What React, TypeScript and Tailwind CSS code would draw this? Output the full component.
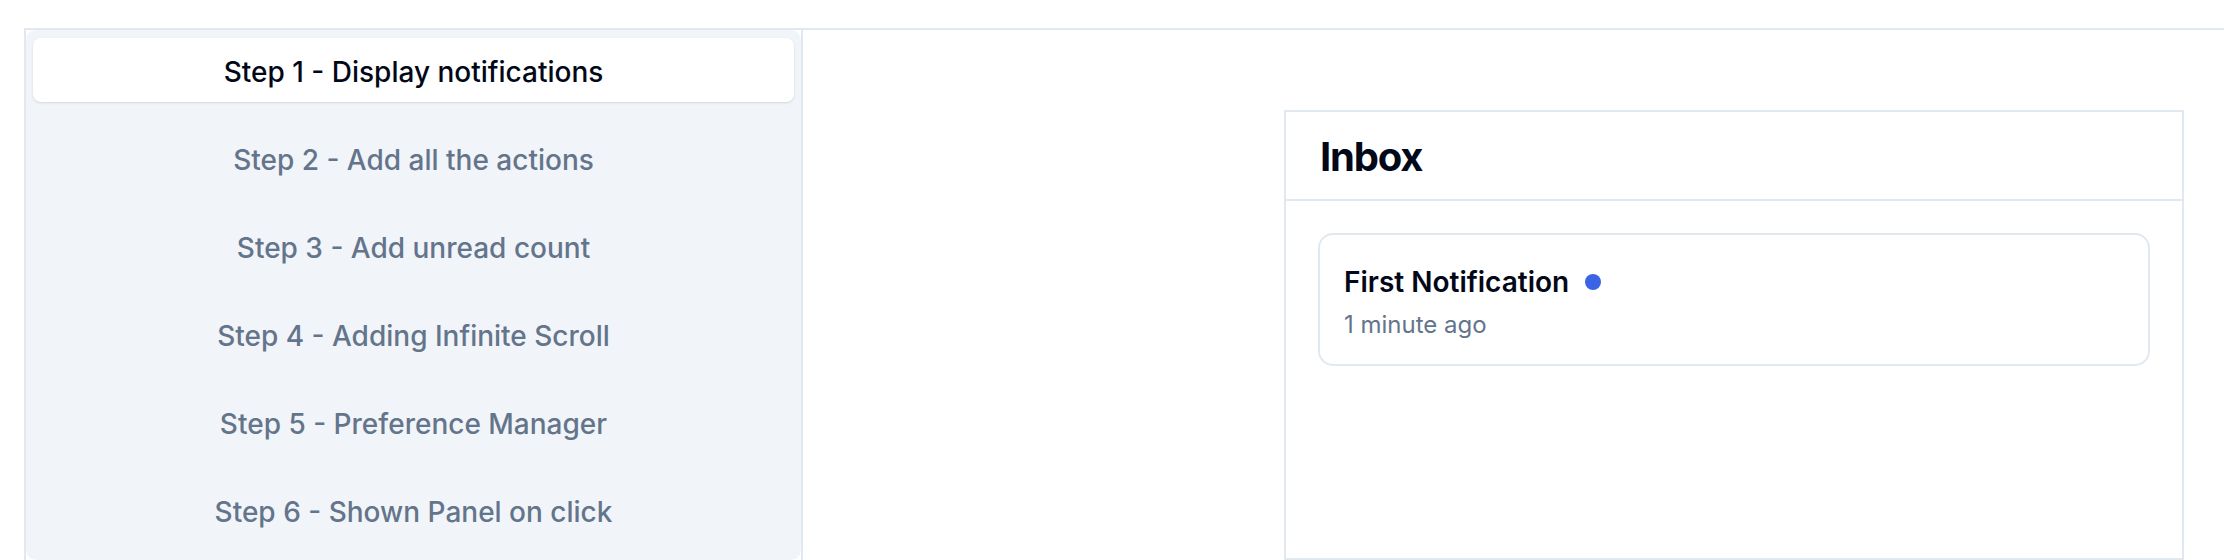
import React from "react";

const steps = [
  "Step 1 - Display notifications",
  "Step 2 - Add all the actions",
  "Step 3 - Add unread count",
  "Step 4 - Adding Infinite Scroll",
  "Step 5 - Preference Manager",
  "Step 6 - Shown Panel on click",
];

export default function App() {
  return (
    <div className="h-[560px] overflow-hidden bg-white pl-[24px] pt-[28px] font-['Inter','Liberation_Sans',sans-serif]">
      <div className="flex h-[532px] border-l-2 border-t-2 border-[#e2e8f0]">
        <div className="flex w-[775px] shrink-0 flex-col gap-[24px] rounded-[10px] bg-[#f1f5f9] px-[7px] pt-[8px]">
          {steps.map((s, i) => (
            <div
              key={s}
              className={
                i === 0
                  ? "flex h-[64px] items-center justify-center rounded-[8px] bg-white pt-[3px] text-[28px] font-medium text-[#020817] shadow-sm"
                  : "flex h-[64px] items-center justify-center rounded-[8px] pt-[3px] text-[28px] font-medium text-[#64748b]"
              }
            >
              {s}
            </div>
          ))}
        </div>
        <div className="flex flex-1 flex-col border-l-2 border-[#e2e8f0] pl-[481px] pt-[80px]">
          <div className="flex w-[900px] flex-1 flex-col border-2 border-[#e2e8f0]">
            <div className="flex h-[89px] items-center border-b-2 border-[#e2e8f0] px-[34px] pt-[3px]">
              <span className="text-[40px] font-bold leading-[48px] tracking-[-1.2px] text-[#020817]">
                Inbox
              </span>
            </div>
            <div className="p-[32px]">
              <div className="rounded-[15px] border-2 border-[#e2e8f0] px-[24px] pb-[23px] pt-[27px]">
                <div className="flex items-center">
                  <span className="text-[28px] font-semibold leading-[40px] text-[#020817]">
                    First Notification
                  </span>
                  <span className="ml-[16px] h-[16px] w-[16px] rounded-full bg-[#3b63e6]" />
                </div>
                <div className="mt-[7px] text-[24px] leading-[32px] text-[#64748b]">
                  1 minute ago
                </div>
              </div>
            </div>
          </div>
        </div>
      </div>
    </div>
  );
}
